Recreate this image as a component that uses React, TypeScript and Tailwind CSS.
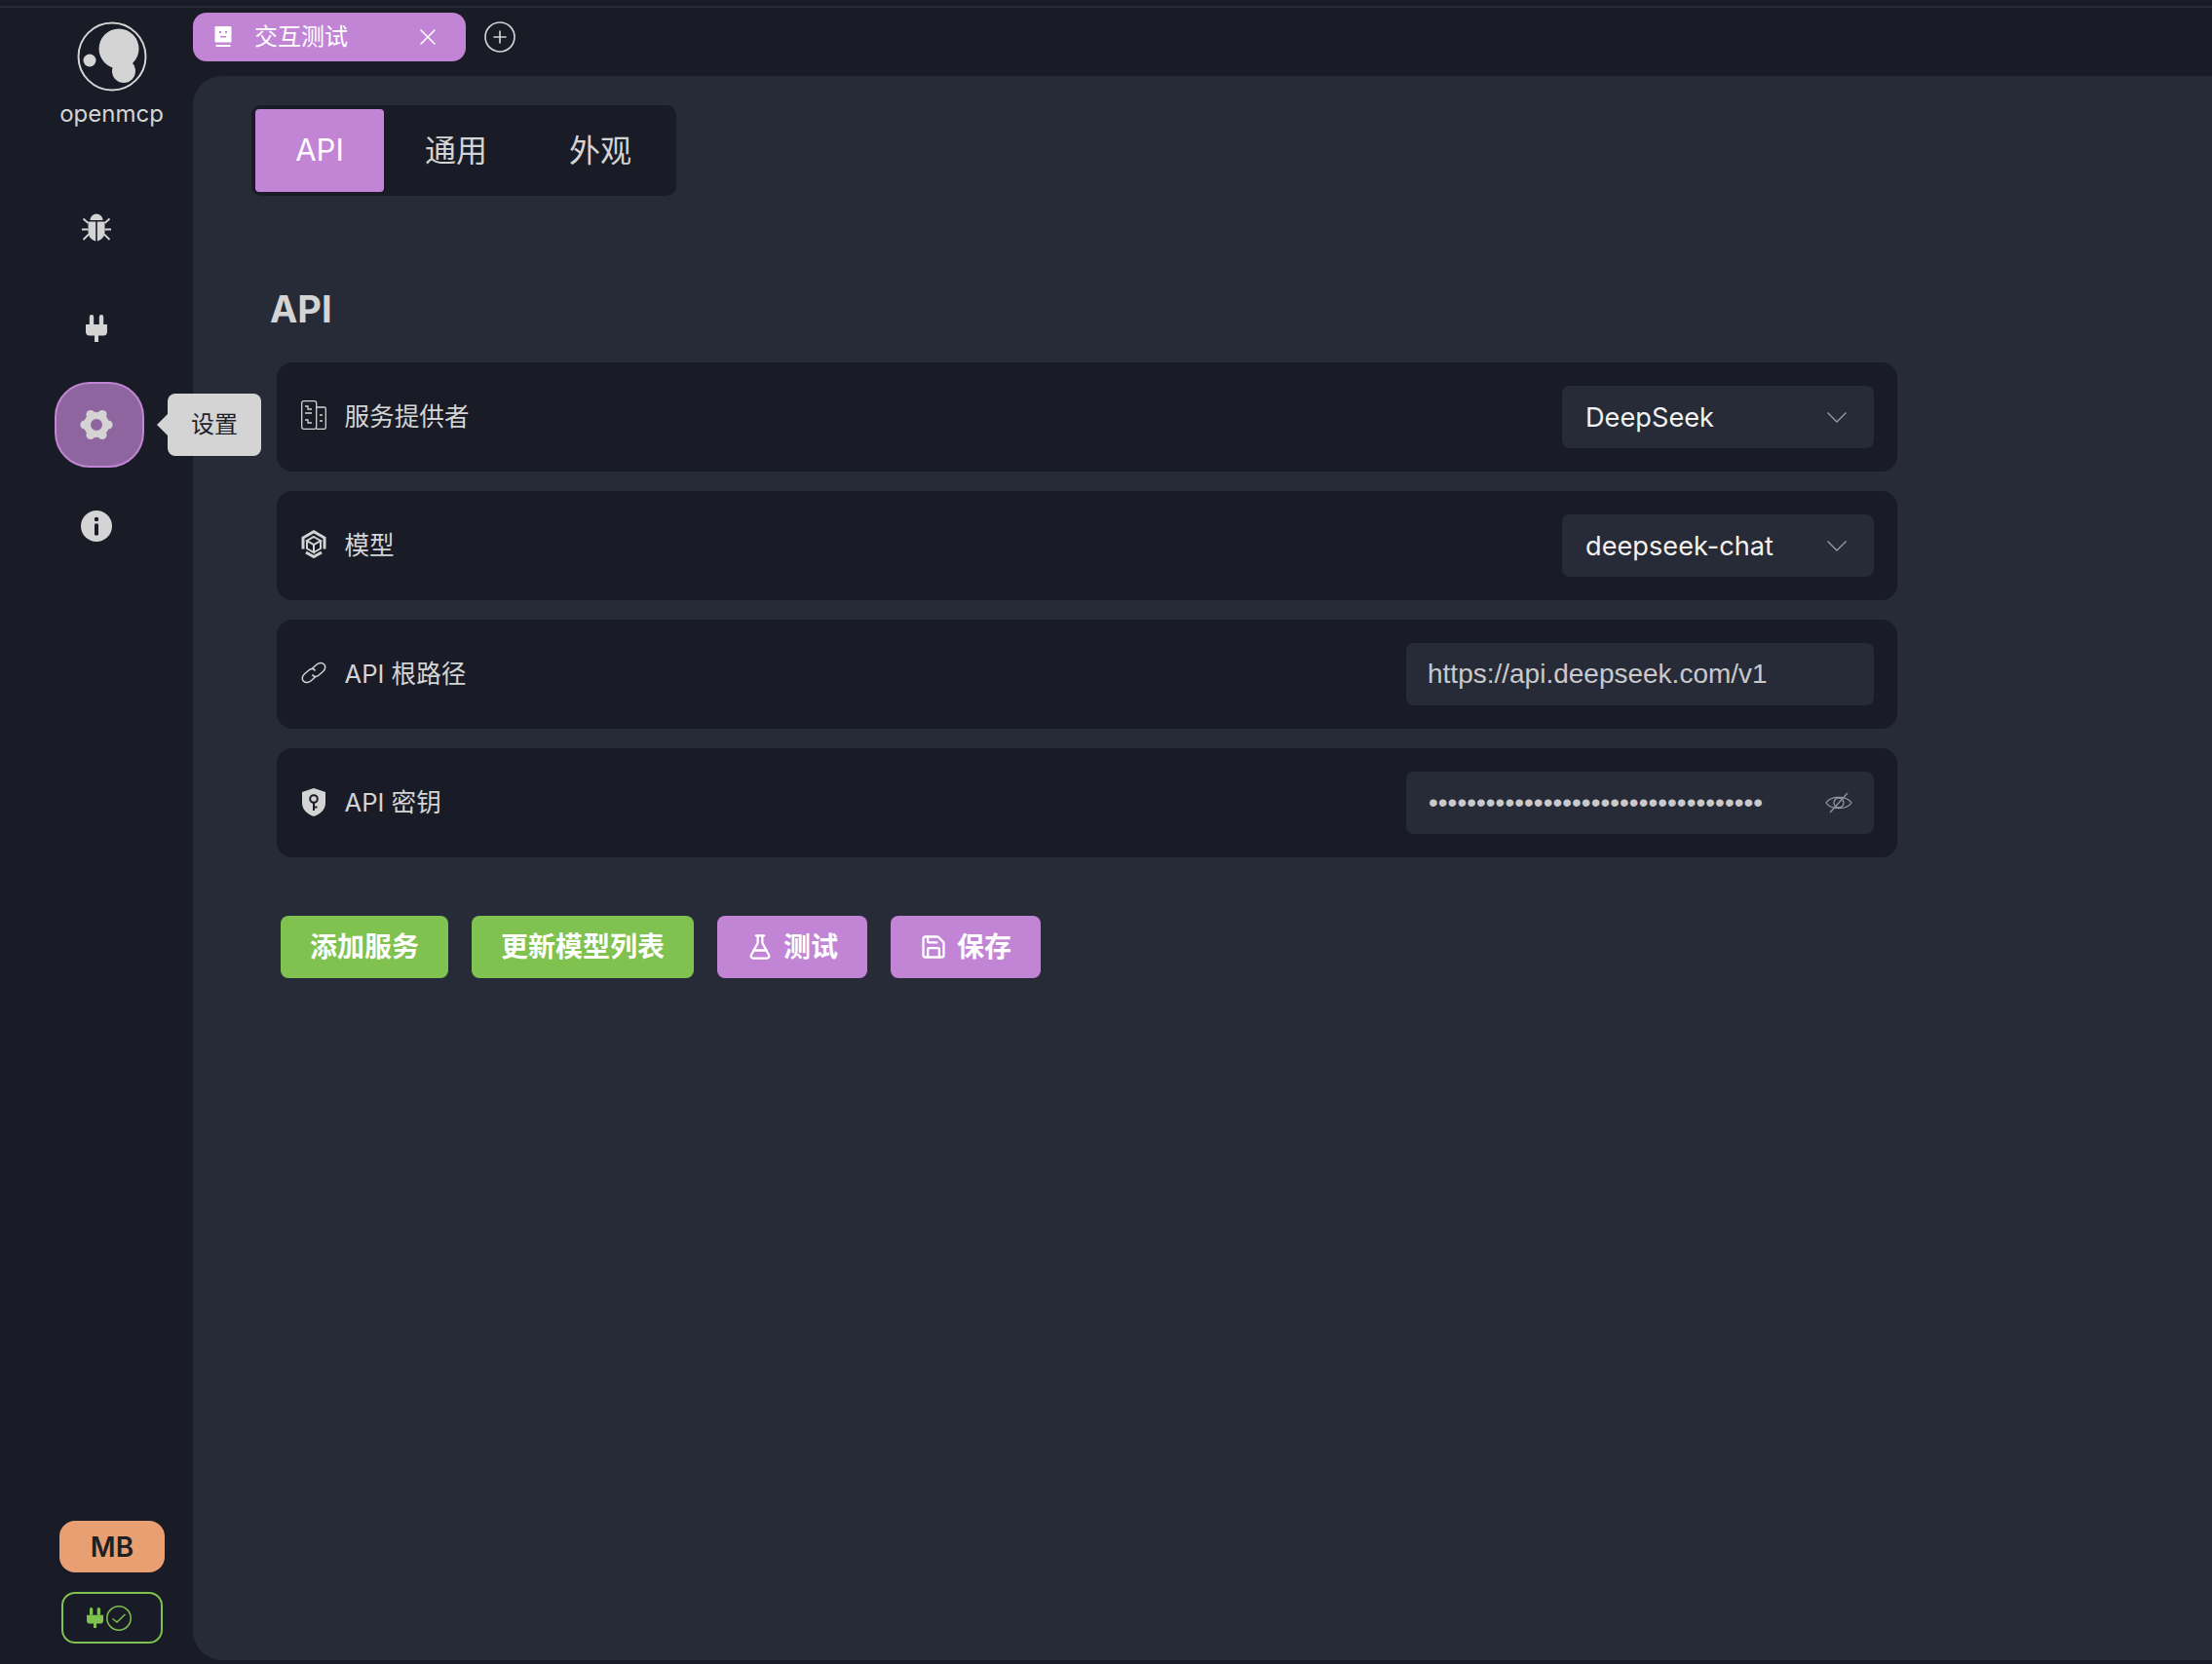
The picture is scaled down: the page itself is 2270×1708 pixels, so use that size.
import React from 'react';
import { CirclePlus, FlaskConical, Save, X } from 'lucide-react';

const font = "font-['Inter','Noto_Sans_CJK_SC',sans-serif]";

function Logo() {
  return (
    <svg width="72" height="72" viewBox="0 0 72 72">
      <circle cx="36" cy="36" r="34.5" fill="none" stroke="#d4d4d4" strokeWidth="2" />
      <circle cx="43" cy="28" r="20.5" fill="#d4d4d4" />
      <circle cx="48" cy="51" r="12" fill="#d4d4d4" />
      <circle cx="13" cy="40" r="6.5" fill="#d4d4d4" />
    </svg>
  );
}

function BugIcon() {
  return (
    <svg width="30" height="29" viewBox="0 0 30 29" fill="#d4d4d4">
      <path d="M8.5 7a6.5 6.5 0 0 1 13 0z" />
      <path d="M6.5 8.5h7.7v20C10 27.5 6.5 24 6.5 19z" />
      <path d="M23.5 8.5h-7.7v20c4.2-1 7.7-4.5 7.7-9.5z" />
      <path d="M1.5 5.5 6.5 10M0 16.5h6.5M1.5 27l5.5-5.5M28.5 5.5 23.5 10M30 16.5h-6.5M28.5 27 23 21.5" stroke="#d4d4d4" strokeWidth="1.8" fill="none" />
    </svg>
  );
}

function PlugIcon({ color = '#d4d4d4', size = 22 }: { color?: string; size?: number }) {
  return (
    <svg width={size} height={(size * 28) / 22} viewBox="0 0 22 28" fill={color}>
      <path d="M3.8 2.2a2.2 2.2 0 0 1 4.4 0V10H3.8zM13.8 2.2a2.2 2.2 0 0 1 4.4 0V10h-4.4z" />
      <path d="M0 10h22v7.5a4 4 0 0 1-4 4h-5V28H9v-6.5H4a4 4 0 0 1-4-4z" />
    </svg>
  );
}

function GearIcon() {
  return (
    <svg width="34" height="32" viewBox="-17 -16 34 32">
      <circle r="9.5" fill="none" stroke="#d4d4d4" strokeWidth="7" />
      <circle cx="12" cy="0" r="4.6" fill="#d4d4d4" />
      <circle cx="-12" cy="0" r="4.6" fill="#d4d4d4" />
      <circle cx="6" cy="10.4" r="4.6" fill="#d4d4d4" />
      <circle cx="-6" cy="10.4" r="4.6" fill="#d4d4d4" />
      <circle cx="6" cy="-10.4" r="4.6" fill="#d4d4d4" />
      <circle cx="-6" cy="-10.4" r="4.6" fill="#d4d4d4" />
    </svg>
  );
}

function InfoIcon() {
  return (
    <svg width="32" height="32" viewBox="0 0 32 32">
      <circle cx="16" cy="16" r="16" fill="#d4d4d4" />
      <circle cx="16" cy="9" r="2.2" fill="#191b26" />
      <rect x="14" y="13.5" width="4" height="12" rx="1" fill="#191b26" />
    </svg>
  );
}

function ProviderIcon() {
  return (
    <svg className="-mt-[3px]" width="26" height="30" viewBox="0 0 26 30" fill="none" stroke="#d4d4d4" strokeWidth="1.3">
      <rect x="0.7" y="0.7" width="15" height="28.6" rx="2" />
      <path d="M15.7 7h8a1.6 1.6 0 0 1 1.6 1.6v19.1a1.6 1.6 0 0 1-1.6 1.6h-8" />
      <path d="M4 6h3v3h4M4 13h7M4 20h3v3h4M19 15h3M19 21h3" />
    </svg>
  );
}

function ModelIcon() {
  return (
    <svg className="-mt-[2px]" width="26" height="29" viewBox="0 0 26 29" fill="none" stroke="#d4d4d4">
      <path d="M2 19.5V8L13 1.7 24 8V19.5M5 23 13 27.5 21 23" strokeWidth="3" />
      <path d="M13 7 20 11 13 15 6 11zM6 11V19L13 23V15M20 11V19L13 23" strokeWidth="2" />
    </svg>
  );
}

function LinkIcon() {
  return (
    <svg className="-mt-[2px]" width="26" height="23" viewBox="0 0 26 23" fill="none" stroke="#d4d4d4" strokeWidth="1.5">
      <path d="M11 7.5 15.5 3.5C18 1 21.5 .8 23.5 2.8 25.5 4.8 25 8 22.5 10.2L18.5 13.7C16 16 13 16 11.5 13.5" />
      <path d="M15 15.5 10.5 19.5C8 22 4.5 22.2 2.5 20.2 .5 18.2 1 15 3.5 12.8L7.5 9.3C10 7 13 7 14.500 9.5" />
    </svg>
  );
}

function ShieldKeyIcon() {
  return (
    <svg width="24" height="29" viewBox="0 0 24 29">
      <path d="M12 0 24 4v11c0 7-5 11.5-12 14C5 26.5 0 22 0 15V4z" fill="#d4d4d4" />
      <circle cx="12" cy="11" r="3.8" fill="none" stroke="#191b26" strokeWidth="2" />
      <path d="M12 15v8M12 19.5h3.5" stroke="#191b26" strokeWidth="2" fill="none" />
    </svg>
  );
}

function EyeOffIcon() {
  return (
    <svg width="28" height="22" viewBox="0 0 28 22" fill="none" stroke="#93959c" strokeWidth="1.3">
      <path d="M1 11C6 3.5 22 3.5 27 11 22 18.5 6 18.5 1 11z" />
      <circle cx="14" cy="11" r="5" />
      <path d="M5 21 23 1" />
    </svg>
  );
}

function Chevron() {
  return (
    <svg width="20" height="11" viewBox="0 0 20 11" fill="none" stroke="#9a9ca3" strokeWidth="1.3">
      <path d="M0.5 0.5 10 10 19.5 0.5" />
    </svg>
  );
}

function CheckCircle() {
  return (
    <svg width="26" height="26" viewBox="0 0 26 26" fill="none" stroke="#7fc24f" strokeWidth="1.5">
      <circle cx="13" cy="13" r="12.2" />
      <path d="M6.5 13.5 11 17l8.5-8" />
    </svg>
  );
}

function RobotIcon() {
  return (
    <svg width="18" height="22" viewBox="0 0 18 22">
      <rect x="0.5" y="0" width="17" height="16.5" rx="1" fill="#fff" />
      <rect x="5" y="5" width="2" height="2" fill="#c285d6" />
      <rect x="11" y="5" width="2" height="2" fill="#c285d6" />
      <rect x="6" y="10" width="6" height="1.5" fill="#c285d6" />
      <rect x="1.5" y="19" width="15" height="2" fill="#fff" />
    </svg>
  );
}

function SideItem({ children, active, className }: { children: React.ReactNode; active?: boolean; className?: string }) {
  return (
    <div
      className={
        active
          ? 'relative -translate-y-px flex items-center justify-center h-[88px] pr-[6px] rounded-[36px] bg-[#8f65a0] border-2 border-[#c285d6]'
          : `relative flex items-center justify-center h-[88px] pr-[6px] ${className ?? ''}`
      }
    >
      {children}
    </div>
  );
}

function Sidebar() {
  return (
    <div className="w-[198px] shrink-0 flex flex-col">
      <div className="flex flex-col items-center pt-[14px] pl-[31px]">
        <Logo />
        <div className="text-[24px] leading-[30px] mt-[8px] text-[#d4d4d4]">openmcp</div>
      </div>
      <div className="flex flex-col gap-[14px] ml-[56px] w-[92px] mt-[57px]">
        <SideItem>
          <BugIcon />
        </SideItem>
        <SideItem className="pt-[4px]">
          <PlugIcon />
        </SideItem>
        <SideItem active>
          <GearIcon />
          <div className="absolute left-[114px] top-[10px] w-[96px] h-[64px] flex items-center justify-center rounded-lg bg-[#d4d4d4] text-[24px] text-[#1d1f2a]">
            设置
            <div className="absolute left-[-11px] top-[21px] w-0 h-0 border-y-[11px] border-y-transparent border-r-[11px] border-r-[#d4d4d4]" />
          </div>
        </SideItem>
        <SideItem className="pt-[2px]">
          <InfoIcon />
        </SideItem>
      </div>
      <div className="mt-auto mb-[21px] ml-[61px] w-[108px] flex flex-col items-center gap-[20px]">
        <div className="w-full h-[53px] flex items-center justify-center rounded-2xl bg-[#e8a073] text-[28px] font-semibold text-[#1f2024]">
          MB
        </div>
        <div className="w-[104px] h-[53px] flex items-center justify-center gap-[3px] pr-[6px] rounded-[14px] border-2 border-[#7fc24f]">
          <PlugIcon color="#7fc24f" size={17} />
          <CheckCircle />
        </div>
      </div>
    </div>
  );
}

function TabBar() {
  return (
    <div className="h-[70px] shrink-0 flex items-start pt-[5px]">
      <div className="w-[280px] h-[50px] flex items-center pl-[22px] pr-[25px] rounded-[14px] bg-[#c285d6] text-white text-[24px]">
        <RobotIcon />
        <span className="ml-[23px] flex-1">交互测试</span>
        <X size={28} strokeWidth={1.3} />
      </div>
      <CirclePlus className="ml-[17px] mt-[7px]" size={36} strokeWidth={1.1} color="#d4d4d4" />
    </div>
  );
}

function SubTabs() {
  return (
    <div className="w-[436px] h-[93px] flex p-[4px] rounded-[10px] bg-[#191b26] text-[32px] text-[#d4d4d4]">
      <div className="w-[132px] flex items-center justify-center rounded bg-[#c285d6] text-[31px] text-white">API</div>
      <div className="w-[148px] flex items-center justify-center">通用</div>
      <div className="w-[148px] flex items-center justify-center">外观</div>
    </div>
  );
}

function Row({ icon, label, children }: { icon: React.ReactNode; label: string; children: React.ReactNode }) {
  return (
    <div className="h-[112px] flex items-center justify-between pl-[25px] pr-[24px] rounded-2xl bg-[#191b26]">
      <div className="flex items-center text-[25.6px] text-[#d4d4d4]">
        <div className="w-[26px] flex justify-center">{icon}</div>
        <span className="ml-[18.5px]">{label}</span>
      </div>
      {children}
    </div>
  );
}

function Select({ value }: { value: string }) {
  return (
    <div className="w-[320px] h-[64px] flex items-center justify-between pl-[24px] pr-[28px] rounded-lg bg-[#272b37] text-[27.2px] text-[#f2f2f2]">
      <span className="pt-[2px]">{value}</span>
      <Chevron />
    </div>
  );
}

function SettingsPanel() {
  return (
    <div className="flex-1 mb-[4px] rounded-l-[30px] bg-[#272b37] pt-[30px] pl-[60px]">
      <SubTabs />
      <div className="mt-[93px] ml-[19px] h-[46px] flex items-center text-[38px] font-bold leading-none text-[#d4d4d4]">API</div>
      <div className="mt-[32px] ml-[26px] w-[1663px] flex flex-col gap-[20px]">
        <Row icon={<ProviderIcon />} label="服务提供者">
          <Select value="DeepSeek" />
        </Row>
        <Row icon={<ModelIcon />} label="模型">
          <Select value="deepseek-chat" />
        </Row>
        <Row icon={<LinkIcon />} label="API 根路径">
          <input
            readOnly
            value="https://api.deepseek.com/v1"
            className="w-[480px] h-[64px] pl-[22px] rounded-lg bg-[#272b37] outline-none text-[28px] text-[#c9c9cc] font-['Liberation_Sans',sans-serif]"
          />
        </Row>
        <Row icon={<ShieldKeyIcon />} label="API 密钥">
          <div className="w-[480px] h-[64px] flex items-center pl-[23px] pr-[22px] rounded-lg bg-[#272b37]">
            <input
              readOnly
              type="password"
              value="sk-00000000000000000000000000000000"
              className="flex-1 min-w-0 outline-none text-[28px] text-[#c9c9cc] font-['Liberation_Sans',sans-serif]"
            />
            <EyeOffIcon />
          </div>
        </Row>
      </div>
      <div className="mt-[60px] ml-[30px] flex gap-[24px] text-[28px] font-bold text-white">
        <button className="w-[172px] h-[64px] flex items-center justify-center rounded-lg bg-[#7fc24f]">添加服务</button>
        <button className="w-[228px] h-[64px] flex items-center justify-center rounded-lg bg-[#7fc24f]">更新模型列表</button>
        <button className="w-[154px] h-[64px] flex items-center justify-center gap-[10px] rounded-lg bg-[#c285d6]">
          <FlaskConical size={28} strokeWidth={2} />
          测试
        </button>
        <button className="w-[154px] h-[64px] flex items-center justify-center gap-[10px] rounded-lg bg-[#c285d6]">
          <Save size={28} strokeWidth={2} />
          保存
        </button>
      </div>
    </div>
  );
}

export default function App() {
  return (
    <div className={`${font} w-[2270px] h-[1708px] flex flex-col overflow-hidden bg-[#191b26]`}>
      <div className="mt-[6px] h-[2px] shrink-0 bg-[#272b37]" />
      <div className="flex-1 min-h-0 flex">
        <Sidebar />
        <div className="flex-1 flex flex-col">
          <TabBar />
          <SettingsPanel />
        </div>
      </div>
    </div>
  );
}
